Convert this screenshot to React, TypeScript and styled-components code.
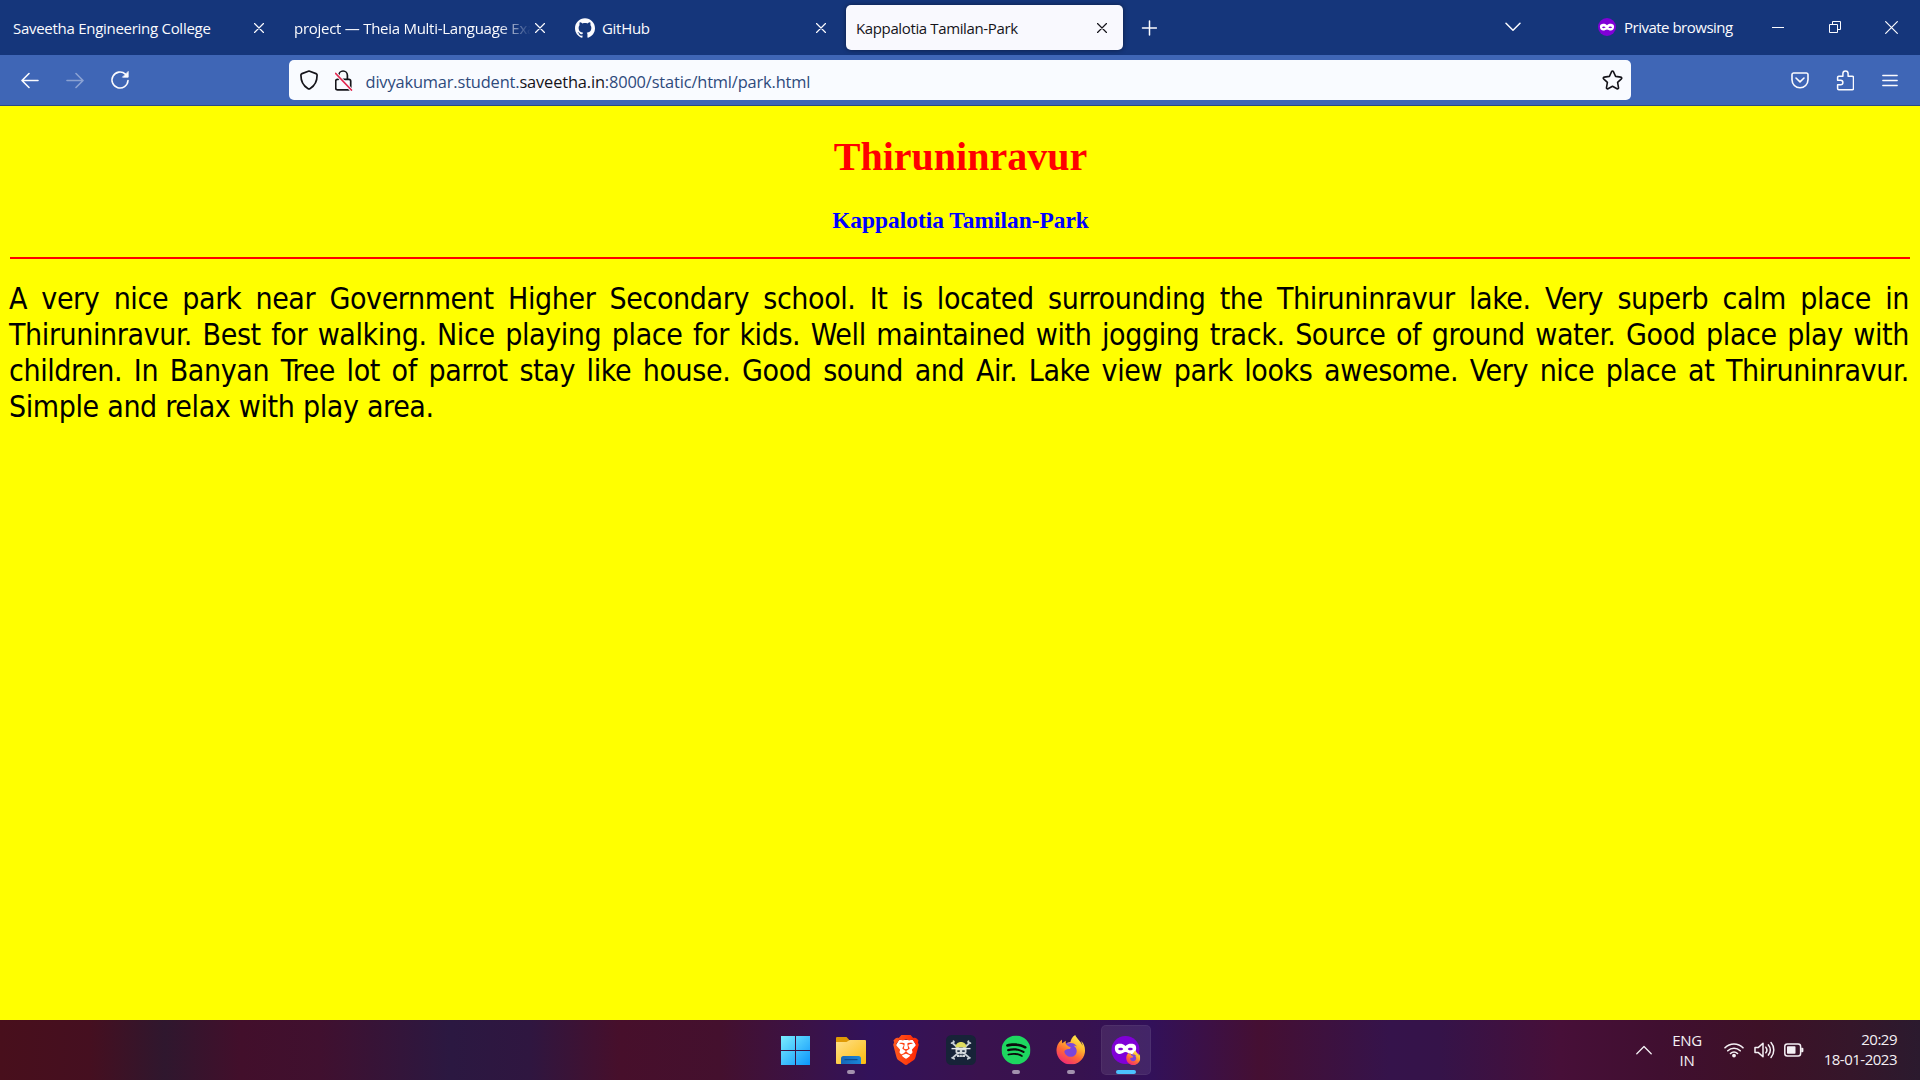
import React from 'react';
import styled, { createGlobalStyle, css } from 'styled-components';
import { SiBrave, SiFirefoxbrowser, SiGithub, SiSpotify } from 'react-icons/si';

const uiFont = '"Open Sans", "Noto Sans", sans-serif';

const GlobalStyle = createGlobalStyle`
  * { box-sizing: border-box; }
  body { margin: 0; overflow: hidden; }
  svg { display: block; flex: none; }
`;

const Screen = styled.div`
  display: flex;
  flex-direction: column;
  width: 1920px;
  height: 1080px;
  overflow: hidden;
  background: #ffff00;
  font-family: ${uiFont};
`;

/* ---------- tab strip ---------- */

const TabStrip = styled.header`
  display: flex;
  align-items: flex-start;
  height: 55px;
  flex: none;
  padding-left: 3px;
  background: #15367b;
  color: #fbfbfe;
`;

const Tabs = styled.div`
  display: flex;
  gap: 4px;
  padding-top: 5px;
`;

const Tab = styled.div<{ $active?: boolean }>`
  display: flex;
  align-items: center;
  width: 277px;
  height: 45px;
  padding: 0 12px 0 10px;
  border-radius: 5px;
  ${(p) =>
    p.$active &&
    css`
      background: #f9f9fe;
      color: #15141a;
      box-shadow: 0 0 5px rgba(0, 0, 0, 0.45);
    `}
`;

const TabIcon = styled(SiGithub)`
  width: 20px;
  height: 20px;
  margin-right: 7px;
`;

const TabTitle = styled.span<{ $fade?: boolean; $spacing: number }>`
  flex: 1;
  overflow: hidden;
  white-space: nowrap;
  font-size: 15px;
  line-height: 22px;
  letter-spacing: ${(p) => p.$spacing}px;
  ${(p) =>
    p.$fade &&
    css`
      mask-image: linear-gradient(to left, transparent, #000 32px);
    `}
`;

const ChromeButton = styled.span<{ $w: number; $dim?: boolean }>`
  display: flex;
  align-items: center;
  justify-content: center;
  flex: none;
  width: ${(p) => p.$w}px;
  height: 100%;
  opacity: ${(p) => (p.$dim ? 0.4 : 1)};
`;

const StripControls = styled.div`
  display: flex;
  height: 54px;
  margin-left: auto;
`;

const PrivateBadge = styled.div`
  display: flex;
  align-items: center;
  gap: 8px;
  width: 151px;
  margin-left: 65px;
  font-size: 15px;
  letter-spacing: -0.5px;
  white-space: nowrap;
`;

const NewTab = styled.div`
  height: 55px;
`;

/* ---------- navigation bar ---------- */

const NavBar = styled.nav`
  display: flex;
  justify-content: space-between;
  align-items: center;
  flex: none;
  height: 51px;
  padding: 0 7.5px;
  border-bottom: 1px solid #2b4a86;
  background: #3f66b6;
  color: #fbfbfe;
`;

const NavGroup = styled.div`
  display: flex;
  height: 100%;
`;

const UrlBar = styled.div`
  display: flex;
  align-items: center;
  width: 1342px;
  height: 40px;
  padding-left: 2.5px;
  border-radius: 5px;
  background: #f9fbff;
  color: #15141a;
`;

const Url = styled.span`
  flex: 1;
  padding: 4px 0 0 4px;
  font-size: 16.4px;
  line-height: 24px;
  letter-spacing: -0.15px;
  color: #2e4a7c;
  white-space: nowrap;
`;

const Host = styled.span`
  color: #15141a;
`;

/* ---------- web page ---------- */

const Page = styled.main`
  flex: 1;
  padding: 28px 10px 0;
  background: #ffff00;
`;

const Title = styled.h1`
  margin: 0;
  padding-left: 1px;
  font: bold 40px/46px "Liberation Serif", "Times New Roman", serif;
  text-align: center;
  color: #ff0000;
`;

const Subtitle = styled.h3`
  margin: 27px 0 0;
  padding-left: 1px;
  font: bold 23.4px/27px "Liberation Serif", "Times New Roman", serif;
  text-align: center;
  color: #0000ff;
`;

const Rule = styled.hr`
  height: 2px;
  margin: 23px 0 0;
  border: 0;
  background: #ff0000;
`;

const Paragraph = styled.p`
  margin: 22px 1px 0 -1px;
  font: 30px/36px "DejaVu Sans Condensed", "DejaVu Sans", sans-serif;
  letter-spacing: -0.4px;
  color: #000;
`;

const Line = styled.span<{ $last?: boolean }>`
  display: block;
  white-space: nowrap;
  text-align: justify;
  text-align-last: ${(p) => (p.$last ? 'left' : 'justify')};
  word-spacing: ${(p) => (p.$last ? '0.3px' : 'normal')};
`;

/* ---------- taskbar ---------- */

const Taskbar = styled.footer`
  display: grid;
  grid-template-columns: 1fr auto 1fr;
  flex: none;
  height: 60px;
  background: linear-gradient(
    90deg,
    #480f1c 0, #450f20 90px, #2f172e 165px, #420f2b 240px, #40102f 320px, #2b1841 450px,
    #2f1640 530px, #470f2b 620px, #44102e 720px, #3a1248 810px, #32125a 870px, #3a124e 980px,
    #37124f 1080px, #32115a 1150px, #450f32 1260px, #35134b 1390px, #351349 1440px, #470f38 1560px,
    #400f30 1660px, #3d1127 1760px, #35162a 1850px, #2b1a2e 1920px
  );
  color: #f4f0f4;
`;

const Apps = styled.div`
  display: flex;
  grid-column: 2;
  padding: 5px 0 0 1px;
`;

const AppSlot = styled.div`
  width: 55px;
  padding: 0 2.5px;
`;

const AppTile = styled.div<{ $active?: boolean }>`
  display: flex;
  flex-direction: column;
  align-items: center;
  width: 50px;
  height: 50px;
  padding-top: 10px;
  border-radius: 5px;
  ${(p) =>
    p.$active &&
    css`
      background: rgba(255, 255, 255, 0.085);
      box-shadow: inset 0 0 0 1px rgba(255, 255, 255, 0.05);
    `}
`;

const Indicator = styled.i<{ $active?: boolean }>`
  width: ${(p) => (p.$active ? 20 : 8)}px;
  height: 4px;
  margin-top: 5px;
  border-radius: 2px;
  background: ${(p) => (p.$active ? '#4cc2ff' : '#a392ae')};
`;

const Tray = styled.div`
  display: flex;
  align-items: center;
  justify-content: flex-end;
  padding-right: 23px;
  font-size: 15px;
  line-height: 20px;
`;

const TrayCell = styled.span`
  display: flex;
  justify-content: center;
  width: 30px;
`;

const Language = styled.div`
  width: 36px;
  margin: 0 14px 0 10px;
  text-align: center;
  letter-spacing: -0.3px;
`;

const Clock = styled.div`
  width: 88px;
  padding-bottom: 2px;
  text-align: right;
  letter-spacing: -0.5px;
`;

/* ---------- drawings ---------- */

const stroke = { fill: 'none', stroke: 'currentColor', strokeLinecap: 'round', strokeLinejoin: 'round' } as const;

const CloseIcon = ({ size = 10 }: { size?: number }) => (
  <svg width={size} height={size} viewBox="0 0 10 10" {...stroke} strokeWidth={12 / size}>
    <path d="M.5.5l9 9M9.5.5l-9 9" />
  </svg>
);
const PlusIcon = () => (
  <svg width="16" height="16" viewBox="0 0 16 16" {...stroke} strokeWidth="1.5">
    <path d="M8.5 1v14M1.5 8h14" />
  </svg>
);
const ChevronDown = () => (
  <svg width="16" height="10" viewBox="0 0 16 10" {...stroke} strokeWidth="1.5">
    <path d="M1 1.3l7 7 7-7" />
  </svg>
);
const BackIcon = () => (
  <svg width="18" height="17" viewBox="0 0 18 17" {...stroke} strokeWidth="1.6">
    <path d="M17 8.5H1.2M8 1.5l-7 7 7 7" />
  </svg>
);
const ForwardIcon = () => (
  <svg width="18" height="17" viewBox="0 0 18 17" {...stroke} strokeWidth="1.6">
    <path d="M1 8.5h15.8M10 1.5l7 7-7 7" />
  </svg>
);
const ReloadIcon = () => (
  <svg width="20" height="20" viewBox="0 0 20 20" {...stroke} strokeWidth="1.6">
    <path d="M18 10.5a8 8 0 1 1-2.6-6.4l1.6 1.6" />
    <path d="M18.2 1.8v5.4h-5.4z" fill="currentColor" strokeWidth=".8" />
  </svg>
);
const ShieldIcon = () => (
  <svg width="18" height="20" viewBox="0 0 18 20" {...stroke} strokeWidth="1.7">
    <path d="M9 1l7 2.6c.7.3 1.1.8 1.1 1.5 0 6-2.2 10.7-6.9 13.4-.8.5-1.6.5-2.4 0C3.1 15.8.9 11.1.9 5.1c0-.7.4-1.2 1.1-1.5z" />
  </svg>
);
const LockIcon = () => (
  <svg width="18" height="21" viewBox="0.8 0 18 21" {...stroke} strokeWidth="1.7">
    <path d="M4.6 9.2V5.3a4.3 4.3 0 0 1 8.6 0v3.9M4 9.3h-.8a1.7 1.7 0 0 0-1.7 1.7v7.1a1.7 1.7 0 0 0 1.7 1.7h11.600a1.700 1.700 0 0 0 1.700-1.700V11a1.700 1.700 0 0 0-1.700-1.700H8" />
    <path d="M1.3 3.2L17 19.8" stroke="#f9fbff" strokeWidth="3.4" />
    <path d="M1.5 3.5l15.700 16.500" stroke="#e22850" strokeWidth="1.8" />
  </svg>
);
const StarIcon = () => (
  <svg width="21" height="20" viewBox="0 0 21 20" {...stroke} strokeWidth="1.6">
    <path d="M9.6 1.6a1 1 0 0 1 1.8 0l2.2 4.8 5.2.7a1 1 0 0 1 .6 1.7l-3.8 3.6.9 5.2a1 1 0 0 1-1.5 1.1l-4.5-2.5L6 18.700a1 1 0 0 1-1.500-1.100l.9-5.200-3.800-3.600a1 1 0 0 1 .6-1.700l5.200-.7z" />
  </svg>
);
const PocketIcon = () => (
  <svg width="18" height="17" viewBox="0 0 18 17" {...stroke} strokeWidth="1.6">
    <path d="M2.5 1h13A1.6 1.6 0 0 1 17 2.6v5.200a8 8 0 0 1-16 0V2.600A1.600 1.600 0 0 1 2.500 1zM5 6l4 3.900L13 6" />
  </svg>
);
const PuzzleIcon = () => (
  <svg width="18" height="21" viewBox="-0.6 0 18 21" {...stroke} strokeWidth="1.5">
    <path d="M6.3 6.3V3.6a2.6 2.6 0 0 1 5.2 0v2.7h4.2a1.2 1.2 0 0 1 1.2 1.2v11a1.2 1.2 0 0 1-1.2 1.2H2.2A1.2 1.2 0 0 1 1 18.5v-3.7h3a2.3 2.3 0 0 0 0-4.6H1V7.5a1.2 1.2 0 0 1 1.2-1.2z" />
  </svg>
);
const MenuIcon = () => (
  <svg width="16" height="13" viewBox="0 0 16 13" {...stroke} strokeWidth="1.3">
    <path d="M.8 1.5h14.4M.8 6.5h14.4M.8 11.5h14.4" />
  </svg>
);
const MinimizeIcon = () => (
  <svg width="12" height="3" viewBox="0 0 12 3">
    <path d="M0 1h12v1H0z" fill="currentColor" />
  </svg>
);
const RestoreIcon = () => (
  <svg width="12" height="12" viewBox="0 0 12 12" fill="none" stroke="currentColor">
    <path d="M.5 3.5h8v8h-8zM3.5 3V.5h8v8H9" />
  </svg>
);

const maskPath =
  'M9 7.3C7.6 5.8 5.7 5.7 4.3 5.9 2.8 6.1 1.9 7 1.9 8.6c0 2.4 1.3 4 3.4 4 1.6 0 2.5-1.2 3.7-1.2s2.1 1.2 3.7 1.2c2.1 0 3.4-1.6 3.4-4 0-1.6-.9-2.5-2.4-2.7-1.4-.2-3.3-.1-4.7 1.4zM4 9.3C4.6 8.2 6.9 8.1 7.5 9.3 7 10.5 4.6 10.5 4 9.3zm6.5 0c.6-1.2 2.9-1.1 3.5 0-.6 1.2-3 1.2-3.5 0z';

const PrivateMask = () => (
  <svg width="18" height="18" viewBox="0 0 18 18">
    <circle cx="9" cy="9" r="9" fill="#8000d7" />
    <path d={maskPath} fill="#fff" fillRule="evenodd" />
  </svg>
);

const WindowsLogo = () => (
  <svg width="30" height="30" viewBox="0.5 0 30 30">
    <defs>
      <linearGradient id="win" x1="0" y1="0" x2="30" y2="30" gradientUnits="userSpaceOnUse">
        <stop offset="0" stopColor="#7df0ff" />
        <stop offset="1" stopColor="#0a94fb" />
      </linearGradient>
    </defs>
    <path fill="url(#win)" d="M.5 1h14v14H.5zM15.500 1h14v14h-14zM.5 16h14v14H.5zM15.500 16h14v14h-14z" />
  </svg>
);

const FolderIcon = () => (
  <svg width="30" height="30" viewBox="0 0 30 30">
    <defs>
      <linearGradient id="folder" x1="0" y1="0" x2="1" y2="1">
        <stop offset="0" stopColor="#ffe08a" />
        <stop offset="1" stopColor="#fbbc0d" />
      </linearGradient>
      <linearGradient id="folderTab" x1="0" y1="0" x2="1" y2="0">
        <stop offset="0" stopColor="#1667b7" />
        <stop offset="1" stopColor="#1a86d8" />
      </linearGradient>
    </defs>
    <path fill="#e09a05" d="M1 2h9.500l3 3.200V9H0V3a1 1 0 0 1 1-1z" />
    <path fill="url(#folder)" d="M0 7h10.500l3.200-2H29a1 1 0 0 1 1 1v22a1 1 0 0 1-1 1H1a1 1 0 0 1-1-1z" />
    <path fill="url(#folderTab)" d="M5 29v-5.500A2.500 2.500 0 0 1 7.500 21h15a2.500 2.500 0 0 1 2.500 2.500V29z" />
    <path fill="#0b4d91" d="M8.500 24h13v1.200h-13z" />
  </svg>
);

const BraveIcon = () => (
  <svg width="30" height="30" viewBox="0 0 30 30">
    <defs>
      <linearGradient id="brave" x1="0" y1="0" x2="1" y2="0">
        <stop offset="0" stopColor="#ff5a1f" />
        <stop offset="1" stopColor="#ff2502" />
      </linearGradient>
    </defs>
    <path fill="#fff" d="M8 5h14l3 5-4 12-6 5-6-5-4-12z" />
    <SiBrave size={30} fill="url(#brave)" />
  </svg>
);

const StrawHatIcon = () => (
  <svg width="30" height="30" viewBox="0 0 30 30">
    <rect width="30" height="30" rx="5.5" fill="#172338" />
    <g stroke="#c9d0d6" strokeWidth="1.7" strokeLinecap="round">
      <path d="M7 8.500L23 22.500M23 8.500L7 22.500" />
      <path d="M5.500 8.200l2.600-1.400M24.500 8.200l-2.600-1.400M6 22.800l2.200 1M24 22.800l-2.200 1M7.500 6v1.500M22.500 6v1.500" />
    </g>
    <path fill="#d3d8dc" d="M9.500 12.500h11v5l-1.500 1v3.500h-8v-3.500l-1.500-1z" />
    <path fill="#dedb60" d="M9.500 12.300c0-3.200 2.400-5.300 5.500-5.300s5.500 2.100 5.500 5.300z" />
    <path stroke="#e8eaec" strokeWidth="1.4" d="M5.500 13.600h19" />
    <path fill="#263347" d="M11.300 15.200h2.500v1.800h-2.500zM16.200 15.200h2.500v1.800h-2.500zM11.500 19.300h7v.7h-7zM13.500 18.500h.6v3h-.6zM15.800 18.500h.6v3h-.6z" />
  </svg>
);

const SpotifyIcon = () => (
  <svg width="30" height="30" viewBox="0 0 30 30">
    <circle cx="15" cy="15" r="13" fill="#0b0b0b" />
    <SiSpotify x={0.5} y={0.5} size={29} fill="#1ed760" />
  </svg>
);

const FirefoxShape = ({ x, y, size }: { x: number; y: number; size: number }) => (
  <svg x={x} y={y} width={size} height={size} viewBox="0 0 30 30">
    <defs>
      <linearGradient id="fox" x1=".8" y1="0" x2=".25" y2="1">
        <stop offset="0" stopColor="#fff44f" />
        <stop offset=".35" stopColor="#ffb52e" />
        <stop offset=".62" stopColor="#ff6a36" />
        <stop offset="1" stopColor="#f0247a" />
      </linearGradient>
    </defs>
    <circle cx="15" cy="15.5" r="8.5" fill="#7a45dc" />
    <SiFirefoxbrowser size={30} fill="url(#fox)" />
  </svg>
);

const FirefoxIcon = () => (
  <svg width="30" height="30" viewBox="0 0 30 30">
    <FirefoxShape x={0} y={0} size={29.5} />
  </svg>
);

const FirefoxPrivateIcon = () => (
  <svg width="30" height="30" viewBox="0 0 30 30">
    <circle cx="14.5" cy="15" r="14" fill="#8000d7" />
    <svg x="1" y="0" width="27" height="27" viewBox="0 0 18 18">
      <path d={maskPath} fill="#fff" fillRule="evenodd" />
    </svg>
    <FirefoxShape x={15} y={15.5} size={14.5} />
  </svg>
);

const ChevronUp = () => (
  <svg width="16" height="10" viewBox="0 0 16 10" {...stroke} strokeWidth="1.3">
    <path d="M.8 8.700L8 1.500l7.200 7.200" />
  </svg>
);
const WifiIcon = () => (
  <svg width="20" height="16" viewBox="0 0 20 16" {...stroke} strokeWidth="1.6">
    <path d="M1 5.800a12.700 12.700 0 0 1 18 0M3.800 8.800a8.700 8.700 0 0 1 12.400 0M6.500 11.500a5 5 0 0 1 7 0" />
    <circle cx="10" cy="13.6" r="1.9" fill="currentColor" stroke="none" />
  </svg>
);
const SpeakerIcon = () => (
  <svg width="21" height="18" viewBox="0 0 21 18" {...stroke} strokeWidth="1.5">
    <path d="M1 6.400h3.400L9 2.300v13.400l-4.600-4.100H1zM11.800 6.200a4.400 4.400 0 0 1 0 5.600M14.400 3.900a7.700 7.700 0 0 1 0 10.200M17 1.600a11.200 11.200 0 0 1 0 14.800" />
  </svg>
);
const BatteryIcon = () => (
  <svg width="20" height="14" viewBox="0 0 20 14" fill="none">
    <rect x=".8" y="1" width="15.8" height="12" rx="2.5" stroke="currentColor" strokeWidth="1.5" />
    <rect x="3" y="3.2" width="8.5" height="7.6" rx=".8" fill="currentColor" />
    <path d="M17.200 4.800h1.200a1 1 0 0 1 1 1v2.400a1 1 0 0 1-1 1h-1.200z" fill="currentColor" />
  </svg>
);

/* ---------- data ---------- */

const tabs = [
  { title: 'Saveetha Engineering College', spacing: -0.28 },
  { title: 'project — Theia Multi-Language Example', spacing: -0.27, fade: true },
  { title: 'GitHub', spacing: -0.3, github: true },
  { title: 'Kappalotia Tamilan-Park', spacing: -0.37, active: true },
];

const lines = [
  'A very nice park near Government Higher Secondary school. It is located surrounding the Thiruninravur lake. Very superb calm place in',
  'Thiruninravur. Best for walking. Nice playing place for kids. Well maintained with jogging track. Source of ground water. Good place play with',
  'children. In Banyan Tree lot of parrot stay like house. Good sound and Air. Lake view park looks awesome. Very nice place at Thiruninravur.',
  'Simple and relax with play area.',
];

const apps = [
  { name: 'start', Icon: WindowsLogo },
  { name: 'explorer', Icon: FolderIcon, running: true },
  { name: 'brave', Icon: BraveIcon },
  { name: 'strawhat', Icon: StrawHatIcon },
  { name: 'spotify', Icon: SpotifyIcon, running: true },
  { name: 'firefox', Icon: FirefoxIcon, running: true },
  { name: 'firefox-private', Icon: FirefoxPrivateIcon, running: true, active: true },
];

export default function App() {
  return (
    <Screen>
      <GlobalStyle />
      <TabStrip>
        <Tabs>
          {tabs.map((t) => (
            <Tab key={t.title} $active={t.active}>
              {t.github && <TabIcon />}
              <TabTitle $spacing={t.spacing} $fade={t.fade}>
                {t.title}
              </TabTitle>
              <ChromeButton $w={18}>
                <CloseIcon />
              </ChromeButton>
            </Tab>
          ))}
        </Tabs>
        <NewTab>
          <ChromeButton $w={52}>
            <PlusIcon />
          </ChromeButton>
        </NewTab>
        <StripControls>
          <ChromeButton $w={40}>
            <ChevronDown />
          </ChromeButton>
          <PrivateBadge>
            <PrivateMask />
            Private browsing
          </PrivateBadge>
          <ChromeButton $w={57}>
            <MinimizeIcon />
          </ChromeButton>
          <ChromeButton $w={57}>
            <RestoreIcon />
          </ChromeButton>
          <ChromeButton $w={57}>
            <CloseIcon size={13} />
          </ChromeButton>
        </StripControls>
      </TabStrip>

      <NavBar>
        <NavGroup>
          <ChromeButton $w={45}>
            <BackIcon />
          </ChromeButton>
          <ChromeButton $w={45} $dim>
            <ForwardIcon />
          </ChromeButton>
          <ChromeButton $w={45}>
            <ReloadIcon />
          </ChromeButton>
        </NavGroup>
        <UrlBar>
          <ChromeButton $w={35}>
            <ShieldIcon />
          </ChromeButton>
          <ChromeButton $w={35}>
            <LockIcon />
          </ChromeButton>
          <Url>
            divyakumar.student.<Host>saveetha.in</Host>:8000/static/html/park.html
          </Url>
          <ChromeButton $w={38}>
            <StarIcon />
          </ChromeButton>
        </UrlBar>
        <NavGroup>
          <ChromeButton $w={45}>
            <PocketIcon />
          </ChromeButton>
          <ChromeButton $w={45}>
            <PuzzleIcon />
          </ChromeButton>
          <ChromeButton $w={45}>
            <MenuIcon />
          </ChromeButton>
        </NavGroup>
      </NavBar>

      <Page>
        <Title>Thiruninravur</Title>
        <Subtitle>Kappalotia Tamilan-Park</Subtitle>
        <Rule />
        <Paragraph>
          {lines.map((line, i) => (
            <Line key={line} $last={i === lines.length - 1}>
              {line}
            </Line>
          ))}
        </Paragraph>
      </Page>

      <Taskbar>
        <Apps>
          {apps.map(({ name, Icon, running, active }) => (
            <AppSlot key={name}>
              <AppTile $active={active}>
                <Icon />
                {running && <Indicator $active={active} />}
              </AppTile>
            </AppSlot>
          ))}
        </Apps>
        <Tray>
          <TrayCell>
            <ChevronUp />
          </TrayCell>
          <Language>
            ENG
            <br />
            IN
          </Language>
          <TrayCell>
            <WifiIcon />
          </TrayCell>
          <TrayCell>
            <SpeakerIcon />
          </TrayCell>
          <TrayCell>
            <BatteryIcon />
          </TrayCell>
          <Clock>
            20:29
            <br />
            18-01-2023
          </Clock>
        </Tray>
      </Taskbar>
    </Screen>
  );
}
